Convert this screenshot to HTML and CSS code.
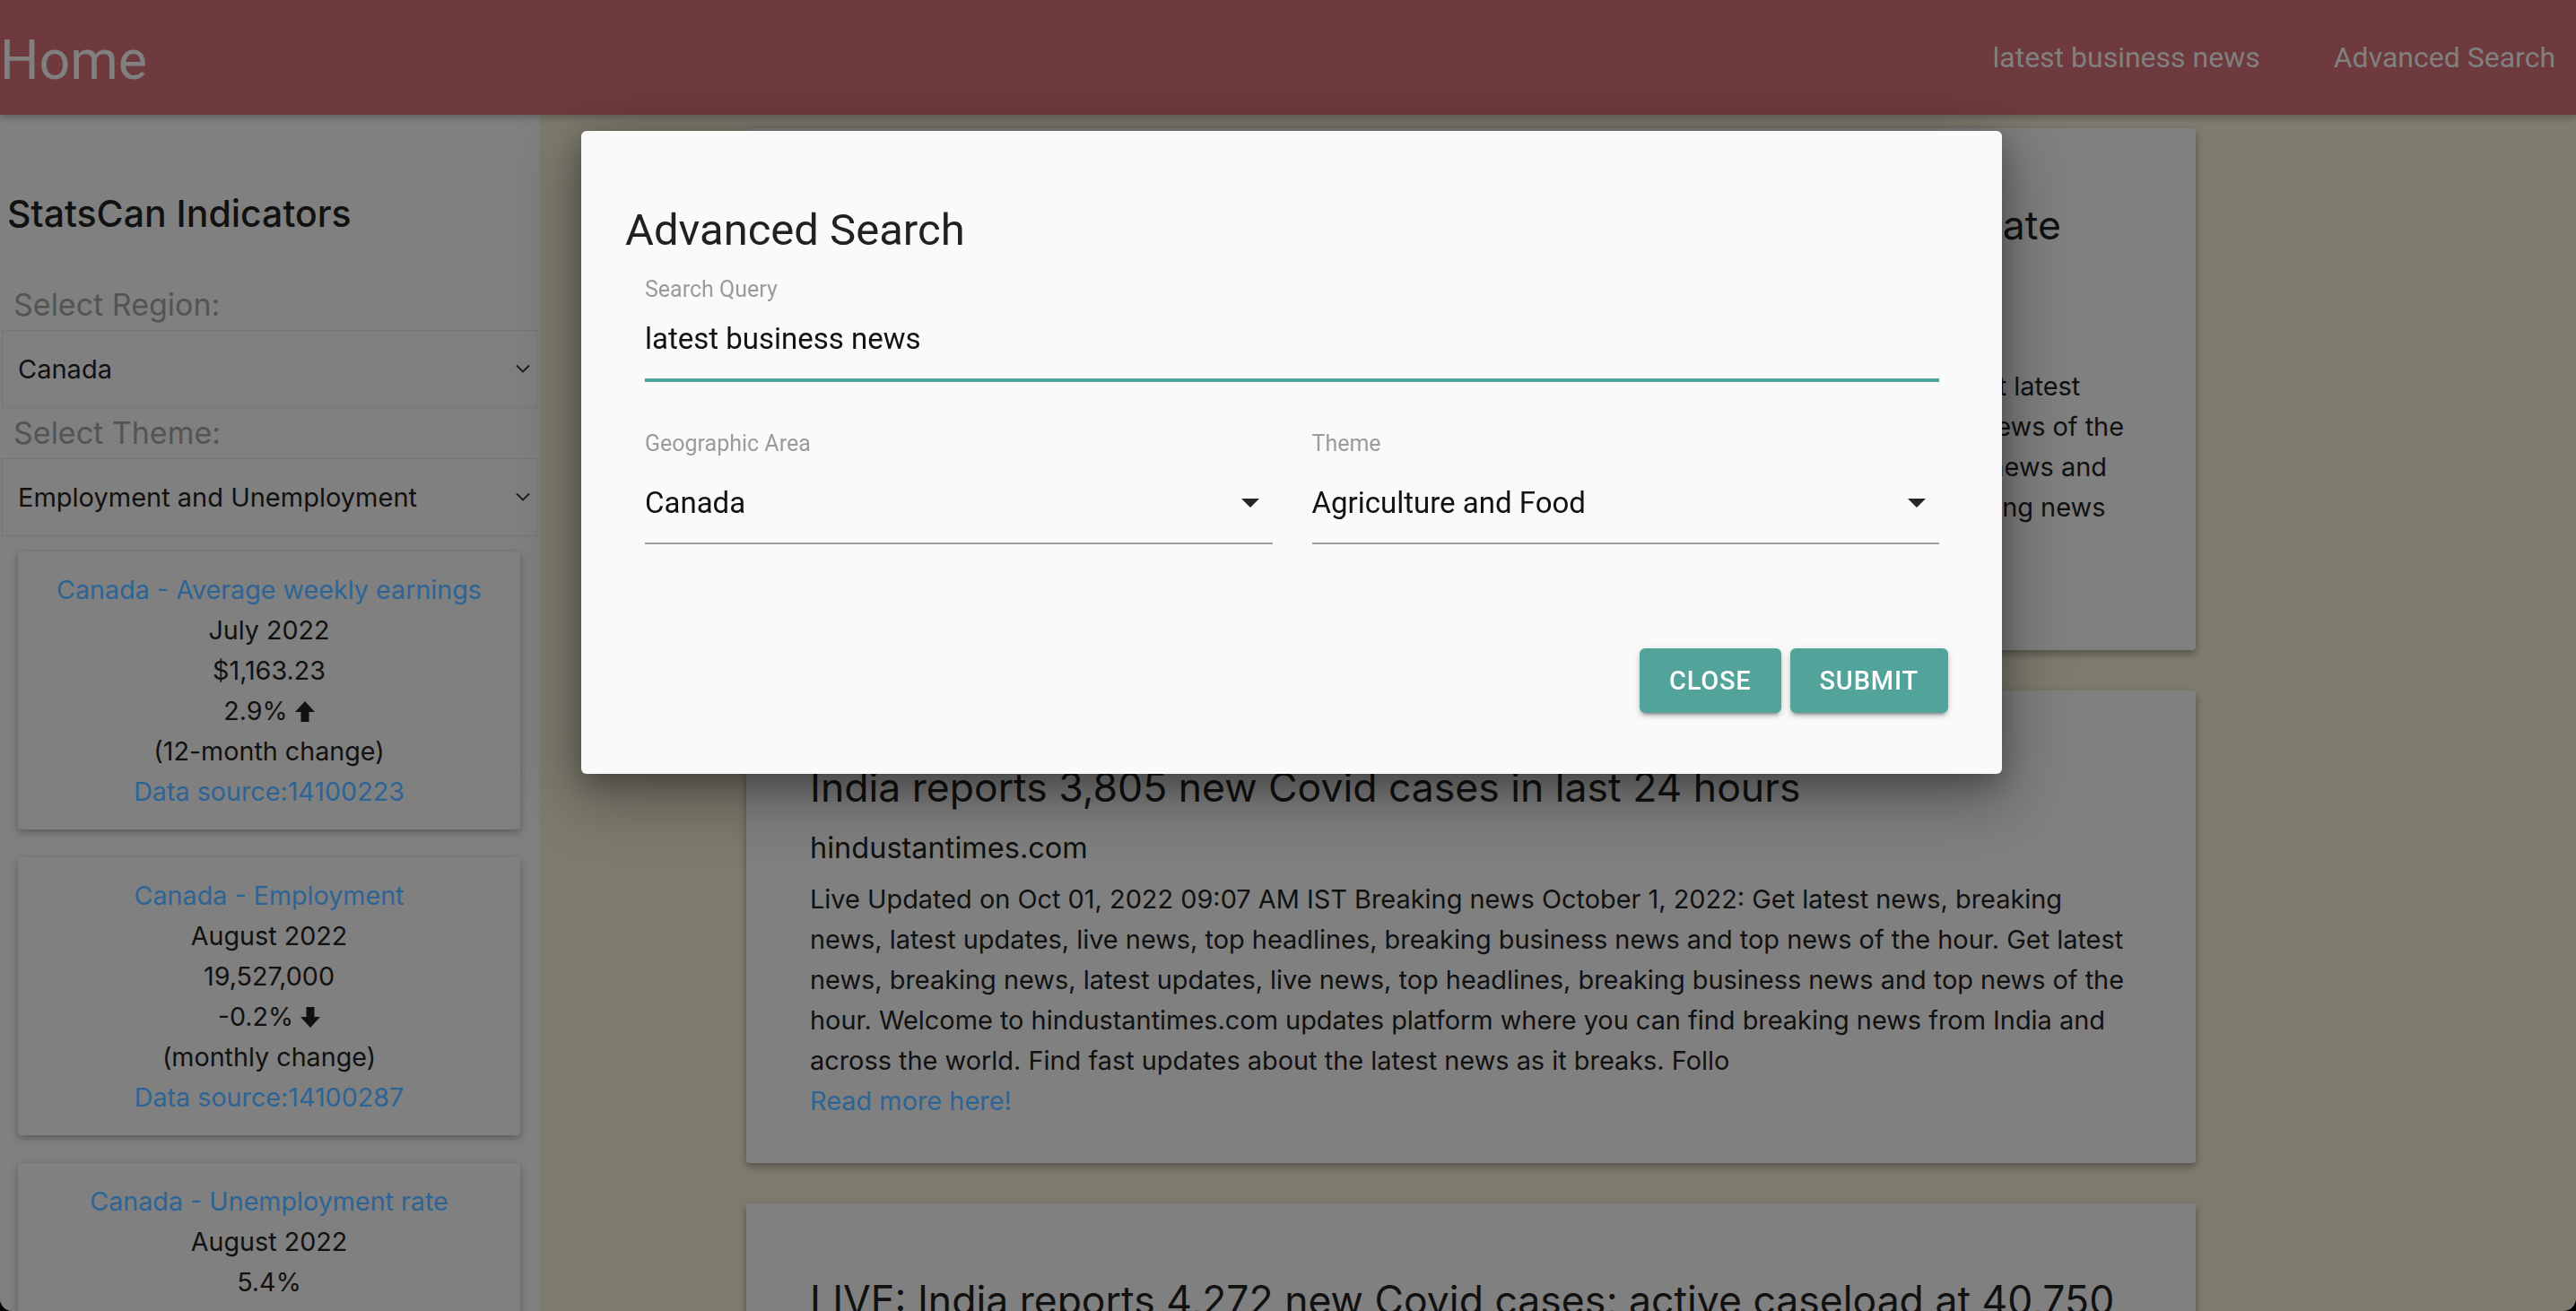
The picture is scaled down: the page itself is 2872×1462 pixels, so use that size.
FILE: index.html
```html
<!DOCTYPE html>
<html lang="en">
<head>
<meta charset="utf-8">
<title>Home</title>
<link rel="stylesheet" href="styles.css">
</head>
<body>
<header class="topbar">
  <a class="brand" href="#">Home</a>
  <nav class="nav">
    <a href="#">latest business news</a>
    <a href="#">Advanced Search</a>
  </nav>
</header>
<div class="layout">
  <aside class="sidebar">
    <h4 class="side-title">StatsCan Indicators</h4>
    <div class="side-label">Select Region:</div>
    <div class="side-select"><span>Canada</span><svg class="chev" width="16" height="10" viewBox="0 0 16 10"><path d="M1 1.5l7 7 7-7" fill="none" stroke="#1a1a1a" stroke-width="1.8"/></svg></div>
    <div class="side-label">Select Theme:</div>
    <div class="side-select side-select-last"><span>Employment and Unemployment</span><svg class="chev" width="16" height="10" viewBox="0 0 16 10"><path d="M1 1.5l7 7 7-7" fill="none" stroke="#1a1a1a" stroke-width="1.8"/></svg></div>

    <div class="ind-card">
      <div class="ind-link">Canada - Average weekly earnings</div>
      <div>July 2022</div>
      <div>$1,163.23</div>
      <div>2.9% <svg class="arrow" width="22" height="23" viewBox="0 0 22 23"><path d="M11 0L22 12H15.5V23H6.5V12H0Z" fill="#111"/></svg></div>
      <div>(12-month change)</div>
      <div class="ind-link">Data source:14100223</div>
    </div>
    <div class="ind-card">
      <div class="ind-link">Canada - Employment</div>
      <div>August 2022</div>
      <div>19,527,000</div>
      <div>-0.2% <svg class="arrow" width="22" height="23" viewBox="0 0 22 23"><path d="M11 23L22 11H15.5V0H6.5V11H0Z" fill="#111"/></svg></div>
      <div>(monthly change)</div>
      <div class="ind-link">Data source:14100287</div>
    </div>
    <div class="ind-card">
      <div class="ind-link">Canada - Unemployment rate</div>
      <div>August 2022</div>
      <div>5.4%</div>
      <div>0.5% <svg class="arrow" width="22" height="23" viewBox="0 0 22 23"><path d="M11 0L22 12H15.5V23H6.5V12H0Z" fill="#111"/></svg></div>
      <div>(monthly change)</div>
      <div class="ind-link">Data source:14100287</div>
    </div>
  </aside>

  <main class="feed">
    <article class="news-card">
      <h5 class="news-title">Breaking News Live Updates - Covid cases, weather, news update<br>for October 1, 2022</h5>
      <div class="news-source">hindustantimes.com</div>
      <p class="news-desc">Latest news, latest updates, live news, top headlines, business news and top news of the day. Get latest<br>news, breaking news, latest updates, live news, top headlines, breaking business news and top news of the<br>hour. Welcome to hindustantimes.com updates platform where you can now find latest breaking news and<br>updates from India and across the world. Find quick updates about the latest news and top breaking news<br>as it breaks. Follo</p>
      <a class="news-link" href="#">Read more here!</a>
    </article>
    <article class="news-card">
      <h5 class="news-title">India reports 3,805 new Covid cases in last 24 hours</h5>
      <div class="news-source">hindustantimes.com</div>
      <p class="news-desc">Live Updated on Oct 01, 2022 09:07 AM IST Breaking news October 1, 2022: Get latest news, breaking news, latest updates, live news, top headlines, breaking business news and top news of the hour. Get latest news, breaking news, latest updates, live news, top headlines, breaking business news and top news of the hour. Welcome to hindustantimes.com updates platform where you can find breaking news from India and across the world. Find fast updates about the latest news as it breaks. Follo</p>
      <a class="news-link" href="#">Read more here!</a>
    </article>
    <article class="news-card">
      <h5 class="news-title">LIVE: India reports 4,272 new Covid cases; active caseload at 40,750</h5>
      <div class="news-source">hindustantimes.com</div>
      <p class="news-desc">Live Updated on Sep 30, 2022 09:12 AM IST Breaking news September 30, 2022: Get latest news, breaking news, latest updates, live news, top headlines and top news of the hour.</p>
      <a class="news-link" href="#">Read more here!</a>
    </article>
  </main>
</div>

<div class="dialog-layer">
  <div class="dialog" role="dialog" aria-labelledby="dlg-title">
    <h2 class="dialog-title" id="dlg-title">Advanced Search</h2>
    <div class="dialog-body">
      <div class="field">
        <div class="field-label">Search Query</div>
        <div class="field-input">latest business news</div>
      </div>
      <div class="field-row">
        <div class="field">
          <div class="field-label">Geographic Area</div>
          <div class="field-select"><span>Canada</span><svg class="drop" width="20" height="10" viewBox="0 0 20 10"><path d="M0 0H20L10 10Z" fill="#262626"/></svg></div>
        </div>
        <div class="field">
          <div class="field-label">Theme</div>
          <div class="field-select"><span>Agriculture and Food</span><svg class="drop" width="20" height="10" viewBox="0 0 20 10"><path d="M0 0H20L10 10Z" fill="#262626"/></svg></div>
        </div>
      </div>
    </div>
    <div class="dialog-actions">
      <button class="btn" type="button">Close</button>
      <button class="btn" type="button">Submit</button>
    </div>
  </div>
</div>
</body>
</html>
```

FILE: styles.css
```css
html, body {
  margin: 0;
  padding: 0;
}
html {
  background: #000;
}
body {
  width: 2872px;
  height: 1462px;
  overflow: hidden;
  position: relative;
  background: #7e7c6e;
  font-family: Inter, "Noto Sans", sans-serif;
  color: #111;
  border-radius: 0 0 14px 14px;
}

/* ---------- top bar ---------- */
.topbar {
  height: 128px;
  background: #6e3a3d;
  display: flex;
  align-items: center;
  justify-content: space-between;
  position: relative;
  z-index: 1;
  box-shadow: 0 3px 8px rgba(0, 0, 0, 0.25);
  font-family: Roboto, "Liberation Sans", sans-serif;
}
.topbar a {
  color: #808080;
  text-decoration: none;
}
.brand {
  font-size: 61px;
  padding-top: 5px;
}
.nav {
  display: flex;
  gap: 82px;
  padding-right: 23px;
  font-size: 32px;
}

/* ---------- layout ---------- */
.layout {
  display: flex;
  height: 1334px;
}

/* ---------- sidebar ---------- */
.sidebar {
  width: 601px;
  flex: none;
  box-sizing: border-box;
  background: #808080;
  padding-top: 85.7px;
}
.side-title {
  margin: 0 0 58.3px 8px;
  font-size: 41px;
  line-height: 48px;
  font-weight: 500;
  color: #111;
}
.side-label {
  margin: 0 0 8px 15px;
  font-size: 34px;
  line-height: 40px;
  color: #545454;
}
.side-select {
  height: 87px;
  box-sizing: border-box;
  margin: 0 2px 8px 2px;
  border: 1px solid #767676;
  display: flex;
  align-items: center;
  justify-content: space-between;
  padding: 0 7px 0 17px;
  font-size: 29px;
  color: #111;
}
.side-select-last {
  margin-bottom: 17px;
}
.ind-card {
  margin: 0 21px 31px 20px;
  padding: 20px 10px;
  background: #808080;
  border-radius: 4px;
  box-shadow: 0 3px 8px rgba(0, 0, 0, 0.3);
  text-align: center;
  font-size: 28.7px;
  line-height: 45px;
}
.ind-link {
  color: #2d6496;
}
.arrow {
  vertical-align: -2px;
}

/* ---------- news feed ---------- */
.feed {
  flex: 1;
  padding: 15px 0 0 231px;
}
.news-card {
  width: 1616px;
  box-sizing: border-box;
  padding: 81.3px 72px 47px 71px;
  margin-bottom: 45px;
  background: #808080;
  border-radius: 4px;
  box-shadow: 0 4px 10px rgba(0, 0, 0, 0.35);
}
.news-title {
  margin: 0;
  font-size: 44.5px;
  line-height: 55px;
  font-weight: 400;
  color: #111;
}
.news-source {
  margin-top: 17.3px;
  font-size: 32.5px;
  line-height: 45px;
}
.news-desc {
  margin: 11.3px 0 0;
  font-size: 28.9px;
  line-height: 45px;
}
.news-link {
  display: block;
  font-size: 28.9px;
  line-height: 45px;
  color: #2d6496;
  text-decoration: none;
}

/* ---------- dialog ---------- */
.dialog-layer {
  position: fixed;
  inset: 0;
  z-index: 10;
  display: flex;
  justify-content: center;
  align-items: flex-start;
  padding: 146px 0 0 8px;
  box-sizing: border-box;
}
.dialog {
  width: 1584px;
  background: #fafafa;
  border-radius: 6px;
  box-shadow: 0 22px 70px 10px rgba(0, 0, 0, 0.3), 0 10px 30px rgba(0, 0, 0, 0.25);
  font-family: Roboto, "Liberation Sans", sans-serif;
  color: #111;
}
.dialog-title {
  margin: 0;
  padding: 81px 0 0 49px;
  font-size: 49px;
  line-height: 60px;
  font-weight: 400;
  color: #212121;
}
.dialog-body {
  padding: 21px 70px 0 71px;
}
.field-label {
  font-size: 25px;
  line-height: 30px;
  color: #9b9b9b;
}
.field-input {
  margin-top: 19.5px;
  padding-bottom: 24px;
  font-size: 33px;
  line-height: 40px;
  border-bottom: 4px solid #52a39a;
}
.field-row {
  display: flex;
  gap: 44px;
  margin-top: 54px;
}
.field-row .field {
  flex: 1;
}
.field-select {
  margin-top: 31px;
  padding: 0 15px 24px 0;
  display: flex;
  align-items: center;
  justify-content: space-between;
  font-size: 33px;
  line-height: 40px;
  border-bottom: 2px solid #9e9e9e;
}
.dialog-actions {
  margin-top: 116px;
  padding: 0 60px 68px;
  display: flex;
  justify-content: flex-end;
  gap: 10px;
}
.btn {
  height: 72px;
  padding: 0 33px;
  border: none;
  border-radius: 6px;
  background: #52a39a;
  color: #fff;
  font-family: Roboto, "Liberation Sans", sans-serif;
  font-size: 29px;
  font-weight: 500;
  letter-spacing: 0.8px;
  text-transform: uppercase;
  box-shadow: 0 6px 2px -4px rgba(0, 0, 0, 0.2), 0 4px 4px rgba(0, 0, 0, 0.14), 0 2px 10px rgba(0, 0, 0, 0.12);
}
```
